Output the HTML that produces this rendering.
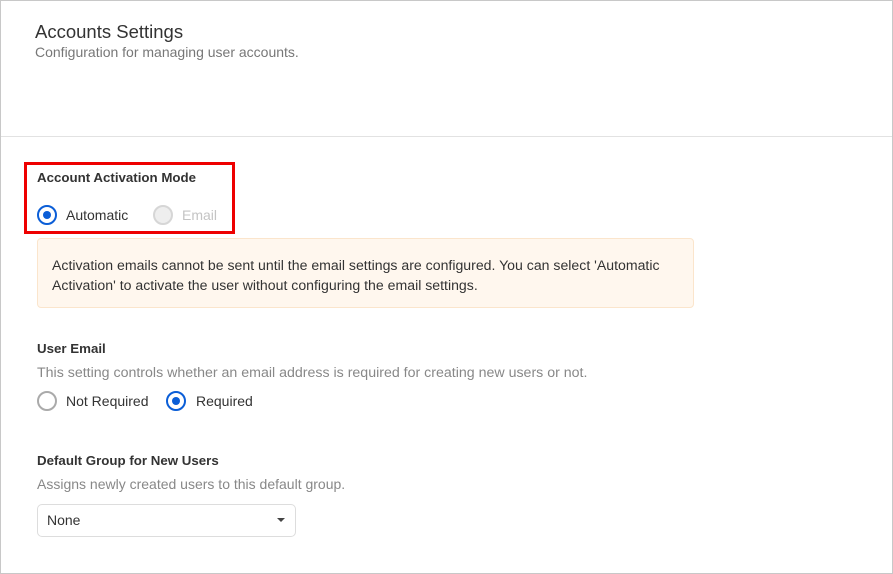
<!DOCTYPE html>
<html><head><style>
*{margin:0;padding:0;box-sizing:border-box}
body{width:893px;height:574px;background:#fff;font-family:"Liberation Sans",sans-serif;position:relative;overflow:hidden}
.frame{position:absolute;left:0;top:0;width:893px;height:574px;border:1px solid #c8c8c8}
.a{position:absolute;white-space:nowrap}
.radio{position:absolute;width:20px;height:20px;border-radius:50%;border:2px solid #aaa;background:#fff}
.radio.on{border-color:#0b5ed7}
.radio.on::after{content:"";position:absolute;left:4px;top:4px;width:8px;height:8px;border-radius:50%;background:#0b5ed7}
.radio.dis{border-color:#d6d6d6;background:#eee}
.lbl{font-size:13.3px;font-weight:bold;color:#333}
.desc{color:#888}
.opt{color:#333}
</style></head><body>
<div class="frame"></div>
<div class="a" style="left:35px;top:21px;font-size:18.5px;color:#333">Accounts Settings</div>
<div class="a desc" style="left:35px;top:44px;font-size:14px;color:#777">Configuration for managing user accounts.</div>
<div class="a" style="left:1px;top:136px;width:891px;height:1px;background:#e2e2e2"></div>

<div class="a" style="left:24px;top:162px;width:211px;height:72px;border:3px solid #ee0000"></div>
<div class="a lbl" style="left:37px;top:170px">Account Activation Mode</div>
<div class="radio on" style="left:37px;top:205px"></div>
<div class="a opt" style="left:66px;top:207px;font-size:14px">Automatic</div>
<div class="radio dis" style="left:153px;top:205px"></div>
<div class="a opt" style="left:182px;top:207px;font-size:14px;color:#c4c4c4">Email</div>

<div class="a" style="left:37px;top:238px;width:657px;height:70px;background:#fff7ee;border:1px solid #fbe5cc;border-radius:4px"></div>
<div class="a" style="left:52px;top:255px;font-size:14.1px;color:#333;line-height:20px">Activation emails cannot be sent until the email settings are configured. You can select 'Automatic<br>Activation' to activate the user without configuring the email settings.</div>

<div class="a lbl" style="left:37px;top:341px">User Email</div>
<div class="a desc" style="left:37px;top:365px;font-size:14.2px">This setting controls whether an email address is required for creating new users or not.</div>
<div class="radio" style="left:37px;top:391px"></div>
<div class="a opt" style="left:66px;top:393px;font-size:14px">Not Required</div>
<div class="radio on" style="left:166px;top:391px"></div>
<div class="a opt" style="left:196px;top:393px;font-size:14px">Required</div>

<div class="a lbl" style="left:37px;top:453px">Default Group for New Users</div>
<div class="a desc" style="left:37px;top:476px;font-size:14px">Assigns newly created users to this default group.</div>
<div class="a" style="left:37px;top:504px;width:259px;height:33px;border:1px solid #ddd;border-radius:5px"></div>
<div class="a opt" style="left:47px;top:512px;font-size:14px">None</div>
<div class="a" style="left:277px;top:518px;width:0;height:0;border-left:4px solid transparent;border-right:4px solid transparent;border-top:4px solid #444"></div>
</body></html>
